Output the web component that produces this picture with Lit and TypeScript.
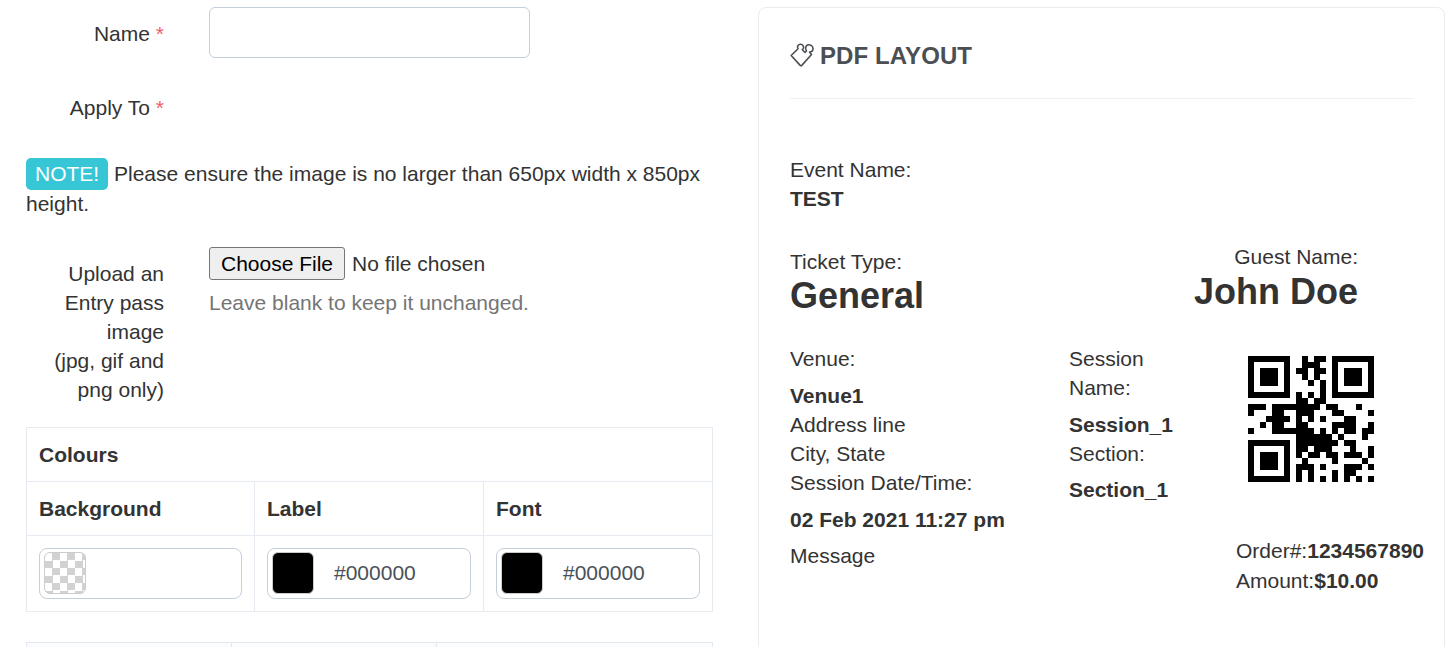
import { LitElement, html, css, svg } from "lit";
import { customElement } from "lit/decorators.js";

const QR = [
  "XXXXXXX..X.XX.XXXXXXX",
  "X.....X..XXX..X.....X",
  "X.XXX.X.XX.XX.X.XXX.X",
  "X.XXX.X..X.X..X.XXX.X",
  "X.XXX.X...X.X.X.XXX.X",
  "X.....X.....X.X.....X",
  "XXXXXXX.X.X.X.XXXXXXX",
  "........XX.XX........",
  "XXX.XXXXXXXX.XX...X..",
  "X...XX..XXX...XX....X",
  "...XXXX.X.X.X...XX...",
  "..X.XX..XX....XXXX..X",
  "X...XXXXXXX.X.X.XX.XX",
  "........XXXXXX.X...X.",
  "XXXXXXX.XXXXXXX.XX...",
  "X.....X.XX.XXX...X..X",
  "X.XXX.X.X.XX.XX.XXX.X",
  "X.XXX.X..X....X....X.",
  "X.XXX.X.XXX.X...XXX.X",
  "X.....X.X.X...X.XX...",
  "XXXXXXX.X.X.X.X.X.X.X",
];

@customElement("app-root")
export class AppRoot extends LitElement {
  static styles = css`
    :host {
      display: block;
      height: 647px;
      overflow: hidden;
      font-family: "Liberation Sans", Arial, sans-serif;
      font-size: 21px;
      line-height: 29px;
      color: #333;
      background: #fff;
    }
    .page {
      display: grid;
      grid-template-columns: 687px 687px;
      column-gap: 45px;
      padding: 7px 0 0 26px;
    }
    .form-row {
      display: grid;
      grid-template-columns: 138px 321px;
      column-gap: 45px;
    }
    .label { text-align: right; }
    .req { color: #f0616d; }
    .name-row { height: 51px; margin-bottom: 35px; }
    .name-row .label { padding-top: 12px; }
    .text-input {
      height: 51px;
      box-sizing: border-box;
      border: 1px solid #c5ced9;
      border-radius: 6px;
      background: #fff;
    }
    .apply-row { height: 29px; margin-bottom: 36px; }
    .note { margin: 0 0 29px; width: 687px; }
    .badge {
      display: inline-block;
      background: #36c6d6;
      color: #fff;
      border-radius: 5px;
      padding: 0 9px;
      line-height: 32px;
      height: 32px;
    }
    .note-line1 { display: block; height: 31px; white-space: nowrap; line-height: 31px; }
    .upload-row { margin-bottom: 23px; grid-template-columns: 138px 480px; }
    .upload-label { padding-top: 12px; }
    .file-line { display: flex; align-items: center; height: 33px; }
    .file-btn {
      width: 136px;
      height: 33px;
      box-sizing: border-box;
      border: 1px solid #767676;
      border-radius: 3px;
      background: #efefef;
      font: inherit;
      color: #000;
      padding: 0;
      margin-right: 7px;
    }
    .help { color: #757575; margin-top: 8px; }
    table {
      border-collapse: collapse;
      table-layout: fixed;
      width: 686px;
    }
    td, th {
      border: 1px solid #e6ebf1;
      padding: 0 12px;
      text-align: left;
      font-weight: 700;
    }
    .hrow { height: 54px; }
    .irow { height: 76px; }
    .irow td { font-weight: 400; }
    .swatch-input {
      display: flex;
      align-items: center;
      height: 51px;
      box-sizing: border-box;
      border: 1px solid #c5ced9;
      border-radius: 8px;
      padding: 0 4px 2px;
      color: #495057;
    }
    .swatch {
      width: 42px;
      height: 42px;
      box-sizing: border-box;
      border: 1px solid #ccc;
      border-radius: 6px;
      margin-right: 20px;
      flex: none;
    }
    .swatch.clear {
      background: repeating-conic-gradient(#d2d2d2 0 25%, #fff 0 50%) 0 0 / 15px 15px;
    }
    .swatch.black { background: #000; }
    .second { margin-top: 30px; }
    .second td { background: #fbfcfe; height: 30px; border-color: #e3e8ef; }

    .card {
      height: 700px;
      box-sizing: border-box;
      border: 1px solid #e8ecf1;
      border-radius: 8px;
      padding: 0 30px 0 31px;
    }
    .card-head {
      height: 91px;
      box-sizing: border-box;
      display: flex;
      align-items: center;
      gap: 6px;
      border-bottom: 1px solid #eef0f3;
      color: #4b4f54;
      font-size: 24px;
      font-weight: 700;
      letter-spacing: 0.1px;
      padding-top: 4px;
    }
    .card-head svg { width: 24px; height: 24px; flex: none; }
    .b { font-weight: 700; }
    .event { margin-top: 56px; }
    .ticket { display: flex; justify-content: space-between; margin-top: 34px; padding-right: 56px; }
    .big { font-size: 36px; font-weight: 700; line-height: 40px; }
    .guest { text-align: right; margin-top: -5px; }
    .guest .big { margin-top: 1px; }
    .details {
      display: grid;
      grid-template-columns: 279px 179px 1fr;
      margin-top: 28px;
    }
    .gap8 { margin-top: 8px; }
    .gap7 { margin-top: 7px; }
    .qr { display: block; width: 126px; height: 126px; }
    .qr-wrap { padding-top: 12px; }
    .msg { margin-top: 7px; }
    .order { line-height: 30px; margin: 0 0 0 -12px; padding-top: 54px; white-space: nowrap; }
  `;

  private qr() {
    const cells = [];
    for (let y = 0; y < QR.length; y++) {
      for (let x = 0; x < QR[y].length; x++) {
        if (QR[y][x] === "X") cells.push(svg`<rect x=${x} y=${y} width="1" height="1"></rect>`);
      }
    }
    return html`<svg class="qr" viewBox="0 0 21 21" fill="#000">${cells}</svg>`;
  }

  render() {
    return html`
      <div class="page">
        <div class="left">
          <div class="form-row name-row">
            <div class="label">Name <span class="req">*</span></div>
            <div class="text-input"></div>
          </div>
          <div class="form-row apply-row">
            <div class="label">Apply To <span class="req">*</span></div>
          </div>
          <div class="note">
            <span class="note-line1"><span class="badge">NOTE!</span> Please ensure the image is no larger than 650px width x 850px</span>
            <span>height.</span>
          </div>
          <div class="form-row upload-row">
            <div class="label upload-label">Upload an<br />Entry pass<br />image<br />(jpg, gif and<br />png only)</div>
            <div>
              <div class="file-line"><button class="file-btn">Choose File</button><span>No file chosen</span></div>
              <div class="help">Leave blank to keep it unchanged.</div>
            </div>
          </div>
          <table>
            <colgroup><col style="width:228px" /><col style="width:229px" /><col style="width:229px" /></colgroup>
            <tr class="hrow"><td colspan="3">Colours</td></tr>
            <tr class="hrow"><td>Background</td><td>Label</td><td>Font</td></tr>
            <tr class="irow">
              <td><div class="swatch-input"><span class="swatch clear"></span></div></td>
              <td><div class="swatch-input"><span class="swatch black"></span>#000000</div></td>
              <td><div class="swatch-input"><span class="swatch black"></span>#000000</div></td>
            </tr>
          </table>
          <table class="second">
            <colgroup><col style="width:205px" /><col style="width:205px" /><col style="width:276px" /></colgroup>
            <tr><td></td><td></td><td></td></tr>
          </table>
        </div>
        <div class="right">
          <div class="card">
            <div class="card-head">
              <svg viewBox="0 0 24 24" fill="none" stroke="#4b4f54" stroke-width="1.6" stroke-linejoin="round">
                <path d="M1.2 12.5 L8 5.7 C6.7 3.5 8.2 1.3 10.5 1.3 C13 1.3 14.5 3.8 13 6 L12.3 6.8 L15 9.5 L16.5 8 C15 5.5 15.5 3 17.5 2 C20 1 23 3 23 5.5 C23 8 21.5 9 19.5 9 L21.5 11.5 L11.8 22.4 Q11 23.2 10.2 22.4 Z"></path>
              </svg>
              PDF LAYOUT
            </div>
            <div class="event">Event Name:<br /><span class="b">TEST</span></div>
            <div class="ticket">
              <div>Ticket Type:<div class="big">General</div></div>
              <div class="guest">Guest Name:<div class="big">John Doe</div></div>
            </div>
            <div class="details">
              <div>
                Venue:
                <div class="b gap8">Venue1</div>
                Address line<br />City, State<br />Session Date/Time:
                <div class="b gap8">02 Feb 2021 11:27 pm</div>
                <div class="msg">Message</div>
              </div>
              <div>
                Session<br />Name:
                <div class="b gap8">Session_1</div>
                Section:
                <div class="b gap7">Section_1</div>
              </div>
              <div class="qr-wrap">
                ${this.qr()}
                <div class="order">Order#:<span class="b">1234567890</span><br />Amount:<span class="b">$10.00</span></div>
              </div>
            </div>
          </div>
        </div>
      </div>
    `;
  }
}
